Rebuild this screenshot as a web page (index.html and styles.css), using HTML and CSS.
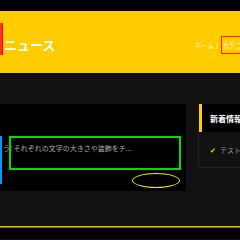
FILE: index.html
```html
<!DOCTYPE html>
<html lang="ja">
<head>
    <meta charset="UTF-8">
    <meta name="viewport" content="width=device-width, initial-scale=1.0">
    <title>ニュース</title>
    <link rel="stylesheet" href="styles.css">
</head>
<body>
    <div class="topbar"></div>
    <header class="site-header">
        <div class="brand">
            <span class="logo-mark"></span>
            <h1>ニュース</h1>
        </div>
        <nav class="breadcrumb">ホーム<span class="sep">/</span><span class="current">カテゴリー</span></nav>
    </header>

    <div class="layout">
        <section class="post-card">
            <div class="excerpt">
                <p>う! それぞれの文字の大きさや装飾をチ...</p>
            </div>
            <span class="mark-box"></span>
            <span class="mark-ellipse"></span>
        </section>

        <aside class="sidebar">
            <div class="widget">
                <h2 class="widget-title">新着情報</h2>
                <ul class="widget-list">
                    <li><span class="check">✔</span>テスト</li>
                </ul>
            </div>
        </aside>
    </div>

    <footer class="site-footer"></footer>
</body>
</html>
```

FILE: styles.css
```css
body {
    font-family: "Noto Sans CJK JP", "Noto Sans", sans-serif;
    margin: 0;
    padding: 0;
    background-color: #111;
    overflow: hidden;
}

.topbar {
    height: 11px;
    background-color: #000;
}

.site-header {
    display: flex;
    align-items: center;
    height: 62px;
    background-color: #fc0;
    border-bottom: 2px solid #0a0a0a;
}

.brand {
    display: flex;
    align-items: center;
}

.logo-mark {
    width: 2px;
    height: 32px;
    margin-top: -6px;
    background-color: #f31;
    border-right: 1px solid #e00;
}

.brand h1 {
    margin: 4px 0 0 1px;
    font-size: 13px;
    font-weight: bold;
    color: #fff;
    line-height: 1;
}

.breadcrumb {
    margin-left: auto;
    margin-right: -17px;
    margin-top: 6px;
    white-space: nowrap;
    font-size: 6.5px;
    color: rgba(255, 255, 255, 0.92);
}

.breadcrumb .sep {
    margin: 0 2px;
}

.breadcrumb .current {
    border: 1px solid #f20;
    padding: 3px 1px;
}

.layout {
    display: flex;
    gap: 12px;
    padding-top: 29px;
}

.post-card {
    position: relative;
    width: 186px;
    height: 87px;
    flex-shrink: 0;
    background-color: #000;
}

.excerpt {
    margin-top: 32px;
    height: 48px;
    border-left: 2px solid #09f;
    padding-left: 1px;
}

.excerpt p {
    margin: 0;
    padding-top: 7px;
    font-size: 7px;
    line-height: 10px;
    color: #aaa;
    white-space: nowrap;
}

/* annotation overlays */
.mark-box {
    position: absolute;
    left: 9px;
    top: 32px;
    width: 168px;
    height: 30px;
    border: 2px solid #0d0;
}

.mark-ellipse {
    position: absolute;
    left: 132px;
    top: 69px;
    width: 46px;
    height: 13px;
    border: 1.5px solid #ee0;
    border-radius: 50%;
}

.sidebar {
    flex: 1;
}

.widget-title {
    margin: 0 0 0 1px;
    height: 28px;
    display: flex;
    align-items: center;
    padding-left: 8px;
    border-left: 3px solid #fc0;
    background-color: #000;
    font-size: 8px;
    font-weight: bold;
    color: #fff;
    white-space: nowrap;
}

.widget-list {
    list-style: none;
    margin: 0;
    padding: 13px 0 0 11px;
    height: 22px;
    border: 1px solid #222;
    border-top: none;
    font-size: 7px;
    color: #999;
    white-space: nowrap;
}

.check {
    color: #fc0;
    margin-right: 4px;
}

.site-footer {
    margin-top: 35px;
    height: 12px;
    background-color: #000;
    border-top: 1px solid #e6b800;
    box-shadow: inset 0 1px 0 #8a6d00;
}
```
